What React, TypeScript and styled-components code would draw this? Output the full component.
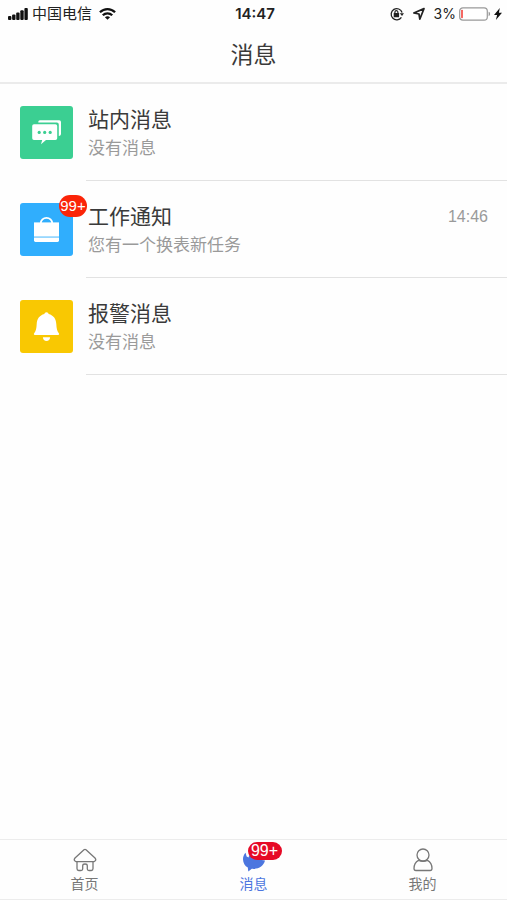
import React from "react";
import styled, { createGlobalStyle } from "styled-components";

const GlobalStyle = createGlobalStyle`
  *, *::before, *::after { box-sizing: border-box; }
  body {
    margin: 0;
    background: #fefefe;
    color: #3a3a3a;
    font-family: "Liberation Sans", "Noto Sans CJK SC", sans-serif;
  }
`;

const Screen = styled.div`
  display: flex;
  flex-direction: column;
  min-height: 100vh;
`;

const StatusBar = styled.div`
  display: grid;
  grid-template-columns: 1fr auto 1fr;
  align-items: center;
  height: 28px;
  padding: 0 5px 0 8px;
  color: #222;
  font-family: Inter, "Noto Sans CJK SC", sans-serif;
  font-size: 14px;
  line-height: 20px;
`;

const StatusGroup = styled.div<{ $end?: boolean }>`
  display: flex;
  align-items: center;
  justify-content: ${(p) => (p.$end ? "flex-end" : "flex-start")};
  gap: ${(p) => (p.$end ? "8px" : "4px")};
`;

const Carrier = styled.span`
  margin-right: 3px;
  font-size: 15px;
`;

const Clock = styled.time`
  font-size: 15px;
  font-weight: 600;
`;

const Battery = styled.span`
  display: flex;
  align-items: center;
  gap: 3px;
`;

const TitleBar = styled.header`
  display: flex;
  align-items: center;
  justify-content: center;
  height: 56px;
  border-bottom: 2px solid #ebebeb;
`;

const PageTitle = styled.h1`
  margin: 0;
  font-size: 23px;
  font-weight: 400;
  line-height: 32px;
`;

const MessageList = styled.ul`
  flex: 1;
  margin: 0;
  padding: 0;
  list-style: none;
`;

const MessageRow = styled.li`
  display: flex;
  gap: 13px;
  padding-left: 20px;
`;

const Tile = styled.div<{ $color: string }>`
  position: relative;
  flex: none;
  width: 53px;
  height: 53px;
  margin-top: 22px;
  border-radius: 3px;
  background: ${(p) => p.$color};

  > svg { display: block; }
`;

const TileBadge = styled.span`
  position: absolute;
  top: -8px;
  right: -14px;
  width: 28px;
  height: 22px;
  border-radius: 11px;
  background: #fb2408;
  color: #fff;
  font-size: 15px;
  line-height: 22px;
  text-align: center;
`;

const MessageBody = styled.div`
  display: flex;
  flex: 1;
  justify-content: space-between;
  height: 97px;
  padding: 22px 19px 0 2px;
  border-bottom: 1px solid #e2e2e2;
`;

const MessageTitle = styled.h2`
  margin: 0;
  font-size: 21px;
  font-weight: 400;
  line-height: 28px;
`;

const Summary = styled.p`
  margin: 0;
  color: #9a9a9a;
  font-size: 17px;
  line-height: 30px;
`;

const SentTime = styled.time`
  color: #9a9a9a;
  font-size: 16px;
  line-height: 28px;
`;

const TabBar = styled.nav`
  display: grid;
  grid-template-columns: repeat(3, 1fr);
  height: 61px;
  border-top: 1px solid #ececec;
  border-bottom: 1px solid #ececec;
`;

const Tab = styled.button<{ $active?: boolean }>`
  display: flex;
  flex-direction: column;
  align-items: center;
  gap: 2px;
  padding: 8px 0 0;
  border: 0;
  background: none;
  color: ${(p) => (p.$active ? "#4c76df" : "#777")};
  font-family: inherit;
  font-size: 14px;
  line-height: 20px;
  cursor: pointer;
`;

const TabIcon = styled.span`
  position: relative;
  width: 24px;
  height: 24px;

  > svg { display: block; }
`;

const TabBadge = styled.span`
  position: absolute;
  top: -6px;
  left: 6px;
  width: 34px;
  height: 18px;
  border-radius: 9px;
  background: #e60a26;
  color: #fff;
  font-size: 16px;
  line-height: 18px;
  text-align: center;
`;

const SignalIcon = () => (
  <svg width="20" height="14" viewBox="0 0 20 14" fill="#111" aria-hidden="true">
    <rect x="0" y="9" width="3.4" height="4" rx="1" />
    <rect x="4.1" y="7.5" width="3.4" height="5.5" rx="1" />
    <rect x="8.2" y="5.5" width="3.4" height="7.5" rx="1" />
    <rect x="12.3" y="3.2" width="3.4" height="9.8" rx="1" />
    <rect x="16.4" y="1" width="3.4" height="12" rx="1" />
  </svg>
);

const WifiIcon = () => (
  <svg width="17" height="14" viewBox="0 0 18 14" fill="none" stroke="#111" strokeWidth="2.4" aria-hidden="true">
    <path d="M1 5.2C5.4.7 12.6.7 17 5.2" />
    <path d="M4 8.4c2.8-2.8 7.2-2.8 10 0" />
    <path d="M6.3 10.5c1.5-1.5 3.9-1.5 5.4 0L9 13.2z" fill="#111" stroke="none" />
  </svg>
);

const RotationLockIcon = () => (
  <svg width="14" height="14" viewBox="0 0 14 14" fill="none" stroke="#222" aria-hidden="true">
    <path d="M11.4 10.4A5.6 5.6 0 1 1 12.1 5.5" strokeWidth="1.3" />
    <path d="M9.8 6.2h4.2L12 9z" fill="#222" stroke="none" />
    <rect x="3.7" y="6" width="5.4" height="4.2" rx=".5" fill="#222" stroke="none" />
    <path d="M4.9 6.5V5.2a1.5 1.5 0 0 1 3 0v1.3" strokeWidth="1.2" />
  </svg>
);

const LocationIcon = () => (
  <svg width="14" height="14" viewBox="0 0 14 14" fill="none" stroke="#222" strokeWidth="1.7" strokeLinejoin="round" aria-hidden="true">
    <path d="M12 1.6 1.8 6l5.2 1 .8 5.2z" />
  </svg>
);

const BatteryIcon = () => (
  <svg width="32" height="14" viewBox="0 0 32 14" aria-hidden="true">
    <rect x=".7" y=".8" width="27.6" height="12.4" rx="3.2" fill="#fff" stroke="#999" strokeWidth="1.2" />
    <rect x="2.2" y="2.8" width="1.6" height="8.4" rx=".8" fill="#f4433c" />
    <path d="M29.6 4.8c2 .6 2 3.8 0 4.4z" fill="#999" />
  </svg>
);

const BoltIcon = () => (
  <svg width="8" height="12" viewBox="0 0 8 12" fill="#111" aria-hidden="true">
    <path d="M5.8 0 0 6.9h3.1L1.9 12 8 4.7H4.9z" />
  </svg>
);

const ChatIcon = () => (
  <svg width="53" height="53" viewBox="0 0 53 53" aria-hidden="true">
    <path d="M18.3 16.4v-.6q0-1.500 1.600-1.500h19.300q1.800 0 1.800 1.800v12q0 1.800-1.800 1.800h-.4V18.400q0-2-1.900-2z" fill="#fff" />
    <path d="M14 18.300h21.400q1.800 0 1.800 1.800v12.100q0 1.800-1.800 1.800H26l-5 4.200 1.200-4.200H14q-1.800 0-1.800-1.800V20.100q0-1.800 1.800-1.800z" fill="#fff" />
    <g fill="#3bcf92">
      <circle cx="19.2" cy="26.4" r="1.6" />
      <circle cx="24.7" cy="26.4" r="1.6" />
      <circle cx="30.2" cy="26.4" r="1.6" />
    </g>
  </svg>
);

const BriefcaseIcon = () => (
  <svg width="53" height="53" viewBox="0 0 53 53" aria-hidden="true">
    <path d="M20.8 21v-.8a5.7 5.3 0 0 1 11.4 0v.8" fill="none" stroke="#fff" strokeWidth="1.8" />
    <path d="M14 19.4h25v14.200H14z" fill="#fff" />
    <path d="M14 34.600h25v3q0 1.400-1.400 1.400H15.400Q14 39 14 37.600z" fill="#fff" />
  </svg>
);

const BellIcon = () => (
  <svg width="53" height="53" viewBox="0 0 53 53" fill="#fff" aria-hidden="true">
    <path d="M26.5 12.3c1.2 0 1.9.7 2.1 1.8 5 1.3 7.5 5 7.7 10 .2 4.5.8 7 2.5 9.2.7.8.3 1.7-.7 1.700H14.900c-1 0-1.400-.9-.7-1.700 1.700-2.200 2.300-4.700 2.500-9.200.2-5 2.700-8.700 7.700-10 .2-1.100.9-1.800 2.100-1.800z" />
    <path d="M22.900 37.200h7.200q-.4 3.800-3.600 3.800t-3.600-3.800z" />
  </svg>
);

const HomeIcon = () => (
  <svg width="24" height="24" viewBox="0 0 24 24" fill="none" stroke="#777" strokeWidth="1.3" strokeLinejoin="round" aria-hidden="true">
    <path d="M11 1.7q1-.8 2 0l9 8.300q2 2.600-1 3.600H3q-3-1-1-3.600z" />
    <path d="M4 13.600v7q0 1.900 1.700 1.900h2.300q1.700 0 1.700-1.500v-3.200q0-1.800 2.300-1.800t2.300 1.800V21q0 1.500 1.700 1.500h2.300q1.700 0 1.700-1.900v-7" />
  </svg>
);

const TabChatIcon = () => (
  <svg width="24" height="24" viewBox="0 0 24 24" fill="#4c76df" aria-hidden="true">
    <path d="M3.600 4.800C1.900 6.500 1 8.700 1 11.200c0 3.600 2 6.700 4.800 8.400l.5 4 3.500-2.800c6.400.8 12-2.700 13.200-8.200L13 11 8 5.500 6.500 9.500 4.600 8.500z" />
  </svg>
);

const PersonIcon = () => (
  <svg width="24" height="24" viewBox="0 0 24 24" fill="none" stroke="#777" strokeWidth="1.3" aria-hidden="true">
    <circle cx="12" cy="7" r="6" />
    <path d="M7.500 12.400C4.600 14 3 17 3 20.600q0 1.900 1.900 1.900h14.200q1.900 0 1.900-1.900c0-3.600-1.600-6.600-4.500-8.200-2.600 1.200-6.400 1.200-9 0z" />
  </svg>
);

const messages = [
  { title: "站内消息", summary: "没有消息", color: "#3bcf92", Icon: ChatIcon },
  { title: "工作通知", summary: "您有一个换表新任务", color: "#30aefd", Icon: BriefcaseIcon, badge: "99+", time: "14:46" },
  { title: "报警消息", summary: "没有消息", color: "#f9c802", Icon: BellIcon },
];

const tabs = [
  { label: "首页", Icon: HomeIcon },
  { label: "消息", Icon: TabChatIcon, badge: "99+", active: true },
  { label: "我的", Icon: PersonIcon },
];

export default function App() {
  return (
    <Screen>
      <GlobalStyle />
      <StatusBar>
        <StatusGroup>
          <SignalIcon />
          <Carrier>中国电信</Carrier>
          <WifiIcon />
        </StatusGroup>
        <Clock>14:47</Clock>
        <StatusGroup $end>
          <RotationLockIcon />
          <LocationIcon />
          <Battery>
            3%
            <BatteryIcon />
            <BoltIcon />
          </Battery>
        </StatusGroup>
      </StatusBar>
      <TitleBar>
        <PageTitle>消息</PageTitle>
      </TitleBar>
      <MessageList>
        {messages.map(({ title, summary, color, Icon, badge, time }) => (
          <MessageRow key={title}>
            <Tile $color={color}>
              <Icon />
              {badge && <TileBadge>{badge}</TileBadge>}
            </Tile>
            <MessageBody>
              <div>
                <MessageTitle>{title}</MessageTitle>
                <Summary>{summary}</Summary>
              </div>
              {time && <SentTime>{time}</SentTime>}
            </MessageBody>
          </MessageRow>
        ))}
      </MessageList>
      <TabBar>
        {tabs.map(({ label, Icon, badge, active }) => (
          <Tab key={label} type="button" $active={active} aria-current={active ? "page" : undefined}>
            <TabIcon>
              <Icon />
              {badge && <TabBadge>{badge}</TabBadge>}
            </TabIcon>
            {label}
          </Tab>
        ))}
      </TabBar>
    </Screen>
  );
}
